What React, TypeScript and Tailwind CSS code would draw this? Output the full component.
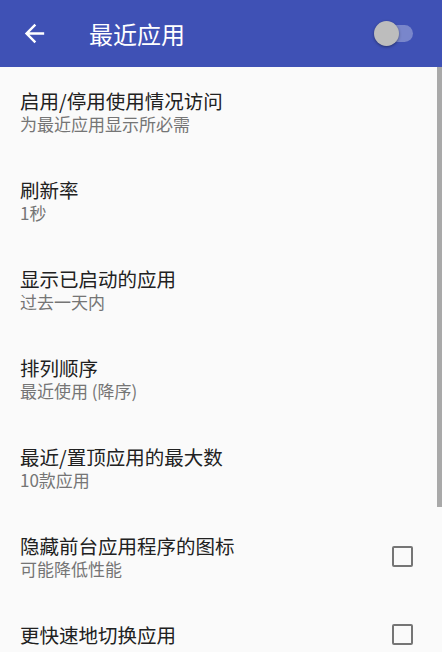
const items = [
  { title: "启用/停用使用情况访问", sub: "为最近应用显示所必需" },
  { title: "刷新率", sub: "1秒" },
  { title: "显示已启动的应用", sub: "过去一天内" },
  { title: "排列顺序", sub: "最近使用 (降序)" },
  { title: "最近/置顶应用的最大数", sub: "10款应用" },
  { title: "隐藏前台应用程序的图标", sub: "可能降低性能", checkbox: true },
  { title: "更快速地切换应用", checkbox: true },
];

const Checkbox = () => (
  <div className="w-[21px] h-[21px] border-[2.5px] border-[#757575] rounded-[2px] shrink-0" />
);

export default function App() {
  return (
    <div
      className="relative w-[442px] h-[652px] overflow-hidden bg-[#fafafa]"
      style={{ fontFamily: '"Noto Sans CJK SC", "Noto Sans", Roboto, sans-serif' }}
    >
      <header className="h-[67px] bg-[#3f51b5] flex items-center pl-[20px] pr-[29px]">
        <svg width="29" height="29" viewBox="0 0 24 24" fill="#fff">
          <path d="M20 11H7.83l5.59-5.59L12 4l-8 8 8 8 1.41-1.41L7.83 13H20v-2z" />
        </svg>
        <h1 className="ml-[40px] text-white text-[24px] leading-[30px]">最近应用</h1>
        <div className="ml-auto relative w-[39px] h-[25px] flex items-center">
          <div className="ml-auto w-[36px] h-[17px] rounded-full bg-[#7986cb]" />
          <div className="absolute left-0 top-0 w-[25px] h-[25px] rounded-full bg-[#bdbdbd] shadow-[0_1px_3px_rgba(0,0,0,0.4)]" />
        </div>
      </header>

      <div className="flex flex-col">
        {items.map((item) => (
          <div key={item.title} className="flex items-center py-[21px] pl-[20px] pr-[29px]">
            <div className="flex-1 flex flex-col">
              <div className="text-[19.5px] leading-[25px] text-[#212121]">{item.title}</div>
              {item.sub && (
                <div className="text-[17px] leading-[22px] text-[#757575]">{item.sub}</div>
              )}
            </div>
            {item.checkbox && <Checkbox />}
          </div>
        ))}
      </div>

      <div className="absolute right-0 top-[67px] w-[5px] h-[440px] bg-[#a9a9a9]" />
    </div>
  );
}
